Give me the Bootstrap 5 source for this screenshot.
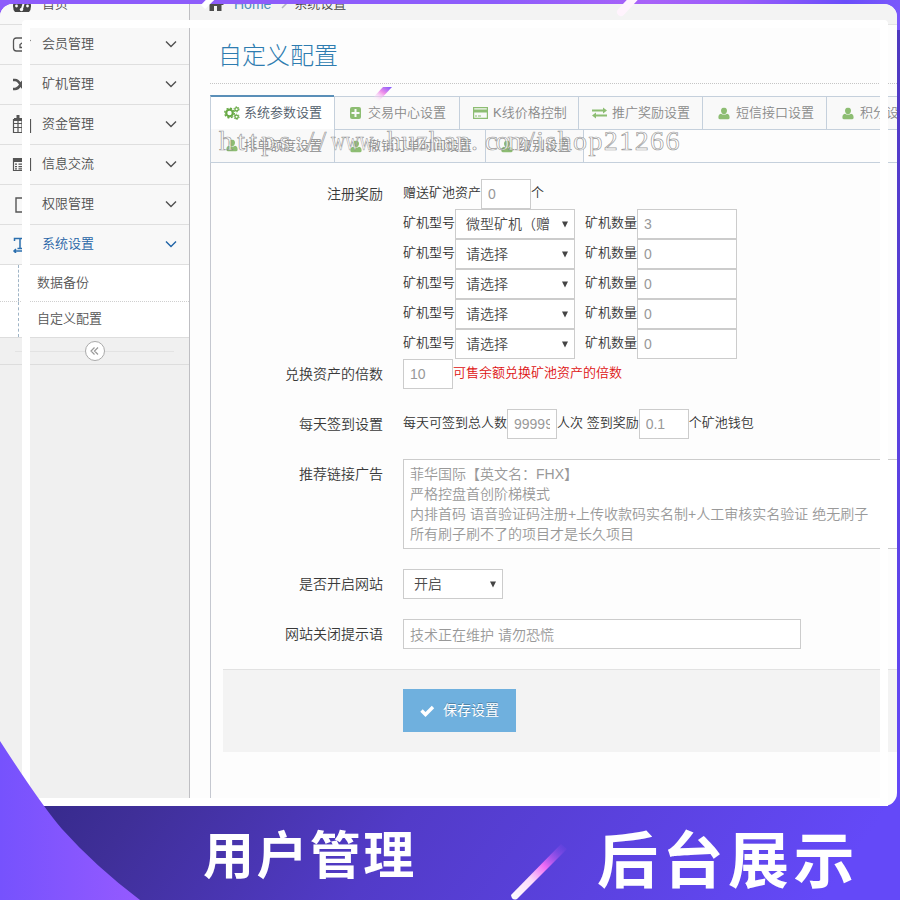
<!DOCTYPE html>
<html lang="zh-CN">
<head>
<meta charset="utf-8">
<meta name="viewport" content="width=device-width, initial-scale=1">
<title>自定义配置</title>
<link href="https://cdn.jsdelivr.net/npm/bootstrap@5.3.0/dist/css/bootstrap.min.css" rel="stylesheet">
<style>
body{font-family:"Liberation Sans","Noto Sans CJK SC",sans-serif;font-size:13px;line-height:20px;color:#444;font-weight:350}
.poster{width:900px;height:900px;background:linear-gradient(90deg,#8d5cfb 0,#8d5cfb 55%,#a862f8 72%,#9a5cfa 82%,#6a4dfa 94%,#7a58fb 100%) top/100% 30px no-repeat,linear-gradient(125deg,#35298a 38%,#3f2f98 46%,#523bc8 64%,#6449f8 95%)}
.panel{width:897px;height:802px;margin-top:4px;border-radius:13px;background:#fdfdfd;overflow:hidden}
.panel-body{margin-top:-19px;height:821px}
.side{width:190px;background:#f0f0f0;border-right:1px solid #bfbfc3;flex:none}
.side .entry{height:40px;padding:0 12px 2px 12px;background:#f8f8f8;border-bottom:1px solid #dfdfdf;color:#505050}
.side .entry .pic{width:20px;height:18px;margin-right:10px}
.side .entry.on{color:#1f63a6}
.sub{background:#fff;border-bottom:1px solid #ddd}
.sub a{display:block;height:36px;line-height:36px;padding-left:18px;margin-left:18px;border-left:1px dashed #9fb4c6;color:#555;text-decoration:none}
.sub div+div{border-top:1px dotted #cfcfcf}
.sub div+div a{height:35px;line-height:34px}
.fold{height:27px;border-bottom:1px solid #ddd;padding:0 15px}
.fold hr{flex:1;margin:0;border-color:#bbb}
.fold span{width:20px;height:20px;border:1px solid #aaa;border-radius:50%;background:#fff}
.crumb{height:40px;background:#f3f3f3;border-bottom:1px solid #e4e4e4;padding:0 0 1px 17px}
.crumb .home{color:#4c8fbd;font-size:14px;margin-left:10px}
.crumb .sep{margin:0 5px 0 8px}
.ttl{height:59px;margin:0 0 12px 20px;padding:6px 0 0 8px;border-bottom:1px dotted #c5c5c5;color:#2e7cb0;font-size:24px;line-height:50px;font-weight:300}
.zone{margin-left:20px;width:760px}
.tabrow{height:33px;white-space:nowrap}
.tabrow .t{height:34px;flex:none;border:1px solid #c5d0dc;border-right:0;background:#f9f9f9;color:#8a8a8a;padding-left:13px}
.tabrow .t.on{background:#fff;border-top:2px solid #5a8fb8;margin-top:-1px;height:34px;border-bottom:0;color:#4d5968;z-index:1}
.tabrow .t svg{margin-right:5px;opacity:.75}
.tabrow .t.on svg{opacity:1;margin-right:4px}
.tabrow .rest{border-left:1px solid #c5d0dc;border-top:1px solid #c5d0dc}
.pane{border-left:1px solid #c5c8d0;border-top:1px solid #c5d0dc;height:660px;padding:16px 0 0 12px}
.line{margin-bottom:20px}
.line>.lb{width:160px;margin-right:20px;text-align:right;font-size:14px;line-height:30px;color:#393939;flex:none}
.ln{height:30px;color:#333;line-height:27px;white-space:nowrap}
.ln .qty{margin-left:10px}
.fi.form-control,.fi.form-select{height:30px;border:1px solid #ccc;border-radius:0;font-size:14px;padding:0 6px;color:#999;background-color:#fff;line-height:20px;font-weight:350;flex:none}
.fi.form-select{color:#4a4a4a;padding:1px 24px 1px 10px;background-image:url("data:image/svg+xml,%3Csvg xmlns='http://www.w3.org/2000/svg' viewBox='0 0 6 7'%3E%3Cpath d='M0 .5h6L3 6.5z' fill='%23444'/%3E%3C/svg%3E");background-size:6px 7px;background-position:right 6px top 11px;text-overflow:clip}
textarea.fi.form-control{width:560px;height:90px;padding:4px 6px;resize:none;overflow:hidden;white-space:pre}
.w50{width:50px}.w100{width:100px}.w120{width:120px}
.acts{height:83px;background:#f3f3f3;border-top:1px solid #e2e2e2;padding:19px 0 0 180px}
.save.btn{width:113px;height:43px;border-radius:0;border:0;background:#6fb0de;color:#fff;font-size:14px;padding:0;text-shadow:0 -1px 0 rgba(0,0,0,.25)}
.over{left:0;top:0;pointer-events:none}
.fr{left:22px;top:20px;width:866px;height:786px;border:8px solid #fff;border-radius:4px 4px 0 0}
.wm{left:219px;top:124px;font:28px/34px "Liberation Serif",serif;color:rgba(255,255,255,.65);-webkit-text-stroke:.7px rgba(120,120,120,.75);white-space:nowrap}
.wm span{display:inline-block}
.s1{width:112px;letter-spacing:4.2px}.s2{width:42px;transform:scaleX(.7);transform-origin:0 0}.dot{width:14px}.s3{width:84px;letter-spacing:.5px}.s4{width:42px;letter-spacing:-2px}.s5{letter-spacing:1.4px}
.foot{height:94px;color:#fff;font-family:"Noto Sans CJK SC",sans-serif;font-weight:700;line-height:94px;white-space:nowrap}
.foot .a{font-size:51px;letter-spacing:2.4px;margin-left:203px;width:394px;line-height:92px}
.foot .b{font-size:61px;letter-spacing:4.500px;padding-top:4px}
</style>
<script src="https://cdn.jsdelivr.net/npm/bootstrap@5.3.0/dist/js/bootstrap.bundle.min.js"></script>
</head>
<body>
<svg width="0" height="0" class="position-absolute">
<symbol id="chev" viewBox="0 0 12 8"><path d="M1 1.500 6 6.500l5-5" fill="none" stroke="currentColor" stroke-width="1.400"/></symbol>
<symbol id="user" viewBox="0 0 12 12"><path d="M6 0C8 0 9 1.400 9 3.300S7.700 6.700 6 6.700 3 5.200 3 3.300 4 0 6 0zM3 6.200C4.500 7.700 7.500 7.700 9 6.200c2 .3 2.600 2 2.600 3.800 0 1.300-.7 2-1.800 2H2.200C1.100 12 .4 11.300.4 10c0-1.800.6-3.500 2.600-3.800z" fill="#69aa46"/></symbol>
</svg>
<div class="poster position-relative overflow-hidden">
<div class="overflow-hidden">
<div class="panel">
<div class="panel-body d-flex">
<aside class="side">
<div class="entry d-flex align-items-center"><svg class="pic" viewBox="0 0 20 18"><path d="M3 17Q1 15 1 11a9 9 0 0 1 18 0q0 4-2 6z" fill="#444"/><path d="M10 14l2-7" stroke="#f8f8f8" stroke-width="2"/><circle cx="4.500" cy="11" r="1.400" fill="#f8f8f8"/><circle cx="15.500" cy="11" r="1.400" fill="#f8f8f8"/><circle cx="9.500" cy="14.500" r="1.700" fill="#f8f8f8"/></svg><span class="flex-grow-1">首页</span></div>
<div class="entry d-flex align-items-center"><svg class="pic" viewBox="0 0 20 18"><path d="M12 3H4.500Q1.500 3 1.500 6v7q0 3 3 3H11q3 0 3-3v-2M8 12.500v-3l8-6 2 2-7 7z" fill="none" stroke="#555" stroke-width="1.300"/></svg><span class="flex-grow-1">会员管理</span><svg width="12" height="8"><use href="#chev"/></svg></div>
<div class="entry d-flex align-items-center"><svg class="pic" viewBox="0 0 20 18"><path d="M1 5h2c6 0 5 9 11 9h4M1 14h2c6 0 5-9 11-9h4" fill="none" stroke="#555" stroke-width="2.600"/></svg><span class="flex-grow-1">矿机管理</span><svg width="12" height="8"><use href="#chev"/></svg></div>
<div class="entry d-flex align-items-center"><svg class="pic" viewBox="0 0 20 18"><path d="M1.500 4.500h17v13h-17zM1.500 8.500h17M1.500 12.500h17M6 5v12M10 5v12M14 5v12" fill="none" stroke="#555" stroke-width="1.200"/><path d="M2 3h16v3H2zM4.500 0h3v5h-3zM13 0h3v5h-3z" fill="#555"/></svg><span class="flex-grow-1">资金管理</span><svg width="12" height="8"><use href="#chev"/></svg></div>
<div class="entry d-flex align-items-center"><svg class="pic" viewBox="0 0 20 18"><path d="M1.500 3.500h17v12h-17z" fill="none" stroke="#555" stroke-width="1.200"/><path d="M1 3h18v4H1zM3 8.500h2v1.200H3zM3 11h2v1.200H3zM3 13.300h2v1.200H3zM6.500 8.500h10v1.200h-10zM6.500 11h10v1.200h-10zM6.500 13.300h10v1.200h-10z" fill="#555"/></svg><span class="flex-grow-1">信息交流</span><svg width="12" height="8"><use href="#chev"/></svg></div>
<div class="entry d-flex align-items-center"><svg class="pic" viewBox="0 0 20 18"><path d="M4 3h9l3 3v11H4z" fill="none" stroke="#555" stroke-width="1.400"/></svg><span class="flex-grow-1">权限管理</span><svg width="12" height="8"><use href="#chev"/></svg></div>
<div class="entry on d-flex align-items-center"><svg class="pic" viewBox="0 0 20 18"><path d="M2.500 6V3.500h11V6M8 3.500v10M5.500 13.500h5M2 16h15M4 14l-2 2 2 2" fill="none" stroke="#2b6fae" stroke-width="1.500"/><path d="M17 5v9" stroke="#2b6fae" opacity=".4"/></svg><span class="flex-grow-1">系统设置</span><svg width="12" height="8"><use href="#chev"/></svg></div>
<div class="sub"><div><a href="#">数据备份</a></div><div><a href="#">自定义配置</a></div></div>
<div class="fold d-flex align-items-center"><hr><span class="d-flex align-items-center justify-content-center"><svg width="9" height="8" viewBox="0 0 9 8"><path d="M4.500.5 1 4l3.500 3.500M8 .5 4.500 4 8 7.500" fill="none" stroke="#999" stroke-width="1.200"/></svg></span><hr></div>
</aside>
<main class="flex-grow-1 overflow-hidden">
<div class="crumb d-flex align-items-center"><svg width="17" height="14" viewBox="0 0 17 14"><path d="M8.500 0 17 8h-2.500v6H10V9H7v5H2.500V8H0z" fill="#4c4c4c"/></svg><span class="home">Home</span><svg class="sep" width="10" height="10" viewBox="0 0 10 10"><path d="M3 1l4 4-4 4" fill="none" stroke="#b2b6bf" stroke-width="1.500"/></svg><span>系统设置</span></div>
<h1 class="ttl">自定义配置</h1>
<div class="zone">
<div class="tabrow d-flex">
<div class="t on d-flex align-items-center" style="width:124px"><svg width="16" height="14" viewBox="0 0 16 14"><circle cx="5.500" cy="7" r="3.300" fill="none" stroke="#69aa46" stroke-width="2.200"/><circle cx="5.500" cy="7" r="4.800" fill="none" stroke="#69aa46" stroke-width="1.400" stroke-dasharray="2 1.770"/><circle cx="12.600" cy="3.300" r="1.700" fill="none" stroke="#69aa46" stroke-width="1.300"/><circle cx="12.600" cy="3.300" r="2.600" fill="none" stroke="#69aa46" stroke-dasharray="1.300 1.420"/><circle cx="12.600" cy="10.800" r="1.700" fill="none" stroke="#69aa46" stroke-width="1.300"/><circle cx="12.600" cy="10.800" r="2.600" fill="none" stroke="#69aa46" stroke-dasharray="1.300 1.420"/></svg>系统参数设置</div>
<div class="t d-flex align-items-center" style="width:125px"><svg width="15" height="12" viewBox="0 0 15 12"><path d="M4 0h7q2 0 2 2v8q0 2-2 2H4q-2 0-2-2V2q0-2 2-2zm2.500 2v3h-3v2h3v3h2V7h3V5h-3V2z" fill="#69aa46"/></svg>交易中心设置</div>
<div class="t d-flex align-items-center" style="width:119px"><svg width="15" height="12" viewBox="0 0 15 12"><path d="M.6.600h13.800v10.800H.6z" fill="none" stroke="#69aa46" stroke-width="1.200"/><path d="M0 2.500h15v3H0zM2 8.500h2v1H2zM5 8.500h3v1H5z" fill="#69aa46"/></svg>K线价格控制</div>
<div class="t d-flex align-items-center" style="width:124px"><svg width="15" height="12" viewBox="0 0 15 12"><path d="M0 2.500h11V.5L15 3.500l-4 3v-2H0zM15 9.500H4v2L0 8.500l4-3v2h11z" fill="#69aa46"/></svg>推广奖励设置</div>
<div class="t d-flex align-items-center" style="width:124px"><svg width="15" height="13" viewBox="-2 0 15 12"><use href="#user" width="12" height="12"/></svg>短信接口设置</div>
<div class="t d-flex align-items-center" style="width:124px"><svg width="15" height="13" viewBox="-2 0 15 12"><use href="#user" width="12" height="12"/></svg>积分设置</div>
</div>
<div class="tabrow d-flex">
<div class="t d-flex align-items-center border-top-0" style="width:124px"><svg width="15" height="13" viewBox="-2 0 15 12"><use href="#user" width="12" height="12"/></svg>排单额度设置</div>
<div class="t d-flex align-items-center" style="width:151px"><svg width="15" height="13" viewBox="-2 0 15 12"><use href="#user" width="12" height="12"/></svg>撤销订单时间设置</div>
<div class="t d-flex align-items-center" style="width:98px"><svg width="15" height="13" viewBox="-2 0 15 12"><use href="#user" width="12" height="12"/></svg>级别设置</div>
<div class="flex-grow-1 rest"></div>
</div>
<form class="pane">
<div class="line d-flex mb-0"><div class="lb">注册奖励</div><div>
<div class="ln d-flex">赠送矿池资产<input class="fi form-control w50" value="0">个</div>
<div class="ln d-flex">矿机型号<select class="fi form-select w120"><option>微型矿机（赠送）</option></select><span class="qty">矿机数量</span><input class="fi form-control w100" value="3"></div>
<div class="ln d-flex">矿机型号<select class="fi form-select w120"><option>请选择</option></select><span class="qty">矿机数量</span><input class="fi form-control w100" value="0"></div>
<div class="ln d-flex">矿机型号<select class="fi form-select w120"><option>请选择</option></select><span class="qty">矿机数量</span><input class="fi form-control w100" value="0"></div>
<div class="ln d-flex">矿机型号<select class="fi form-select w120"><option>请选择</option></select><span class="qty">矿机数量</span><input class="fi form-control w100" value="0"></div>
<div class="ln d-flex">矿机型号<select class="fi form-select w120"><option>请选择</option></select><span class="qty">矿机数量</span><input class="fi form-control w100" value="0"></div>
</div></div>
<div class="line d-flex"><div class="lb">兑换资产的倍数</div><div class="ln d-flex"><input class="fi form-control w50" value="10"><span style="color:#dd1111">可售余额兑换矿池资产的倍数</span></div></div>
<div class="line d-flex"><div class="lb">每天签到设置</div><div class="ln d-flex">每天可签到总人数<input class="fi form-control w50" value="99999">人次 签到奖励<input class="fi form-control w50" value="0.1">个矿池钱包</div></div>
<div class="line d-flex"><div class="lb">推荐链接广告</div><textarea class="fi form-control">菲华国际【英文名：FHX】
严格控盘首创阶梯模式
内排首码 语音验证码注册+上传收款码实名制+人工审核实名验证 绝无刷子
所有刷子刷不了的项目才是长久项目</textarea></div>
<div class="line d-flex"><div class="lb">是否开启网站</div><select class="fi form-select w100"><option>开启</option></select></div>
<div class="line d-flex"><div class="lb">网站关闭提示语</div><input class="fi form-control" style="width:398px" value="技术正在维护 请勿恐慌"></div>
<div class="acts"><button type="button" class="save btn d-flex align-items-center justify-content-center"><svg class="me-2" width="15" height="12" viewBox="0 0 15 12"><path d="M1.500 5.500 5.500 9.500 13 2" fill="none" stroke="#fff" stroke-width="3.400"/></svg>保存设置</button></div>
</form>
</div>
</main>
</div>
</div>
<footer class="foot d-flex"><div class="a">用户管理</div><div class="b">后台展示</div></footer>
</div>
<div class="fr position-absolute"></div>
<div class="wm position-absolute"><span class="s1">https://</span><span class="s2">www</span><span class="dot">.</span><span class="s3">huzhan</span><span class="dot">.</span><span class="s4">com</span><span class="s5">/ishop21266</span></div>
<svg class="over position-absolute" width="900" height="900">
<defs>
<linearGradient id="g1"><stop stop-color="#7652fd"/><stop offset="1" stop-color="#955aff"/></linearGradient>
<linearGradient id="g2" x1="0" y1="1" x2="1" y2="0"><stop stop-color="#fff"/><stop offset=".35" stop-color="#fbdcfb"/><stop offset=".6" stop-color="#ee6bf5"/><stop offset="1" stop-color="#8a4af0" stop-opacity="0"/></linearGradient>
<linearGradient id="g3" x1="0" y1="1" x2="1" y2="0"><stop offset=".1" stop-color="#fff" stop-opacity="0"/><stop offset=".6" stop-color="#ef8fe9"/><stop offset="1" stop-color="#7a55ff"/></linearGradient>
</defs>
<path d="M0 741Q42 806 62 829 95 866 140 900H0z" fill="url(#g1)"/>
<path d="M511 895 561 844 567 849 517 899Q512 901 511 895z" fill="url(#g2)"/>
<path d="M370 101 383 87H392L379 101z" fill="url(#g3)"/>
<path d="M621 12 635-3" stroke="#fff3fd" stroke-width="8" stroke-linecap="round"/>
<path d="M203 7 214-4" stroke="#fff" stroke-width="6"/>
</svg>
</div>
</body>
</html>
